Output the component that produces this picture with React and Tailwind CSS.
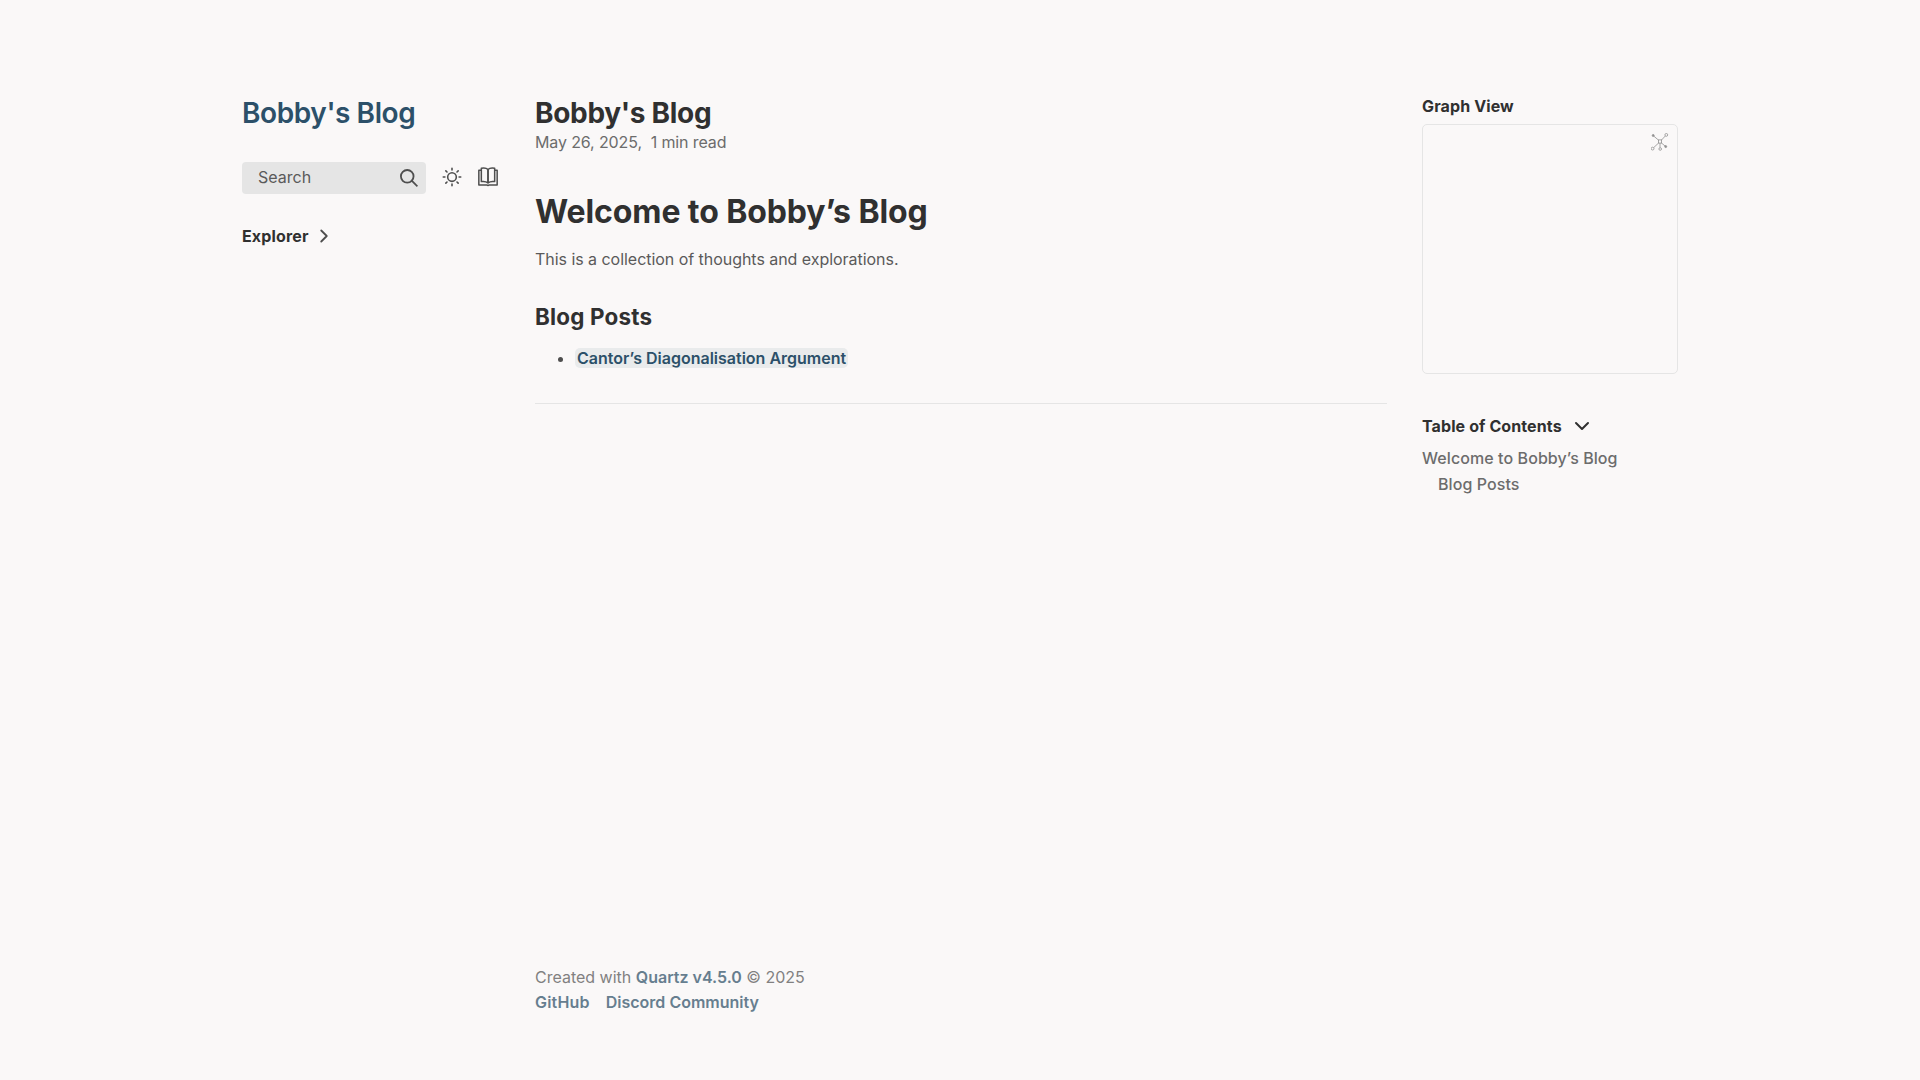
import React from 'react'

const Chevron = ({ className }) => (
  <svg xmlns="http://www.w3.org/2000/svg" className={className} viewBox="0 0 24 24" fill="none" stroke="currentColor" strokeWidth="2" strokeLinecap="round" strokeLinejoin="round">
    <polyline points="6 9 12 15 18 9" />
  </svg>
)

const SearchIcon = () => (
  <svg xmlns="http://www.w3.org/2000/svg" className="h-[18px] w-[18px] text-[#4e4e4e]" viewBox="0 0 19.9 19.7" fill="none" stroke="currentColor" strokeWidth="2">
    <path strokeLinecap="square" d="M18.5 18.3l-5.4-5.4" />
    <circle cx="8" cy="8" r="7" />
  </svg>
)

const SunIcon = () => (
  <svg xmlns="http://www.w3.org/2000/svg" className="h-5 w-5 text-[#4e4e4e]" viewBox="0 0 24 24" fill="none" stroke="currentColor" strokeWidth="1.9" strokeLinecap="round">
    <circle cx="12" cy="12" r="5.2" />
    <path d="M12 1.5v2M12 20.5v2M1.5 12h2M20.5 12h2M4.6 4.6l1.4 1.4M18 18l1.4 1.4M4.6 19.4L6 18M18 6l1.4-1.4" />
  </svg>
)

const BookIcon = () => (
  <svg xmlns="http://www.w3.org/2000/svg" className="h-5 w-5 text-[#4e4e4e]" viewBox="0 0 24 24" fill="none" stroke="currentColor" strokeWidth="1.8" strokeLinejoin="round">
    <path d="M4 1.500c3-.5 6-.5 8 1.500v16c-2-1.500-5-2-8-1.500z" />
    <path d="M20 1.500c-3-.5-6-.5-8 1.500v16c2-1.500 5-2 8-1.500z" />
    <path d="M4 4H1v17.500h9.500c1 .8 2 .8 3 0H23V4h-3" />
  </svg>
)

const GraphIcon = () => (
  <svg xmlns="http://www.w3.org/2000/svg" className="h-[18px] w-[18px] text-[#909090]" viewBox="0 0 18 18" fill="none" stroke="currentColor" strokeWidth="0.8">
    <rect x="7.400" y="6.900" width="3.200" height="3.200" />
    <circle cx="2.200" cy="2.500" r="1" fill="currentColor" />
    <circle cx="15.300" cy="1.900" r="1.400" />
    <circle cx="1.600" cy="15.600" r="1.400" />
    <circle cx="9.200" cy="16" r="1.300" />
    <circle cx="14.700" cy="13.600" r="1" fill="currentColor" />
    <path d="M3 3.300l4.500 3.800M14.300 3l-3.800 4M2.700 14.600l4.900-4.600M9 10.100v4.600M10.500 10l3.500 3" />
  </svg>
)

export default function App() {
  return (
    <div className="min-h-screen bg-[#faf8f8] text-[#5a5a5a] font-['Inter',sans-serif] [font-optical-sizing:none] flex flex-col pl-[242px] pt-[96px]">
      <div className="flex items-start">
        <aside className="w-[293px] shrink-0">
          <h2 className="text-[28px] leading-[34px] font-semibold tracking-[-0.4px] text-[#2c5069]">Bobby's Blog</h2>
          <div className="mt-[32px] flex items-center">
            <div className="w-[184px] h-8 rounded-[4px] bg-[#e5e5e5] flex items-center justify-between pl-4 pr-2">
              <span className="text-[16px] text-[#5a5a5a] -translate-y-px">Search</span>
              <SearchIcon />
            </div>
            <div className="ml-[16px] -translate-y-px"><SunIcon /></div>
            <div className="ml-[16px] -translate-y-px"><BookIcon /></div>
          </div>
          <div className="mt-[30px] flex items-center gap-[4px] text-[#303030] font-bold text-[16px] tracking-[0.15px]">
            Explorer
            <Chevron className="h-[22px] w-[22px] -rotate-90 text-[#4e4e4e]" />
          </div>
        </aside>

        <main className="w-[852px] shrink-0">
          <h1 className="text-[28px] leading-[34px] font-bold tracking-[-0.3px] text-[#303030]">Bobby's Blog</h1>
          <p className="text-[16px] leading-[24px] tracking-[-0.12px] text-[#6c6c6c] whitespace-pre">May 26, 2025,  1 min read</p>
          <h1 className="mt-[36px] text-[32px] leading-[44px] font-bold tracking-[-0.1px] text-[#303030]">Welcome to Bobby’s Blog</h1>
          <p className="mt-[13px] text-[16px] leading-[24px] tracking-[-0.04px]">This is a collection of thoughts and explorations.</p>
          <h2 className="mt-[30px] text-[22.4px] leading-[32px] font-bold tracking-[0.2px] text-[#303030]">Blog Posts</h2>
          <ul className="mt-[13px] list-disc pl-[40px] marker:text-[#4e4e4e]">
            <li className="text-[16px] leading-[24px]">
              <a className="inline-block leading-[20px] rounded-[5px] px-[2px] bg-[#8f9fa926] font-semibold text-[#2c5069]">Cantor’s Diagonalisation Argument</a>
            </li>
          </ul>
          <hr className="mt-[33px] border-t border-[#e5e5e5]" />
        </main>

        <aside className="ml-[35px] w-[256px] shrink-0">
          <h3 className="text-[16px] leading-[20px] font-bold tracking-[0.12px] text-[#303030]">Graph View</h3>
          <div className="relative mt-[8px] h-[250px] rounded-[5px] border border-[#e5e5e5]">
            <div className="absolute top-[8px] right-[8px]"><GraphIcon /></div>
          </div>
          <div className="mt-[40px] flex items-center gap-[8px] text-[#303030] font-bold text-[16px] leading-[24px] tracking-[0.1px]">
            Table of Contents
            <Chevron className="h-6 w-6" />
          </div>
          <div className="mt-[7px] text-[16px] leading-[26px] font-medium tracking-[0.08px] text-[#6c6c6c]">
            <div>Welcome to Bobby’s Blog</div>
            <div className="pl-4">Blog Posts</div>
          </div>
        </aside>
      </div>

      <footer className="ml-[293px] mt-[468px] text-[16px] leading-[25px] text-[#4e4e4e] opacity-70">
        <p>Created with <a className="font-semibold text-[#284b63]">Quartz v4.5.0</a> © 2025</p>
        <p className="flex gap-4 font-semibold text-[#284b63]"><a className="tracking-[0.2px]">GitHub</a><a>Discord Community</a></p>
      </footer>
    </div>
  )
}
